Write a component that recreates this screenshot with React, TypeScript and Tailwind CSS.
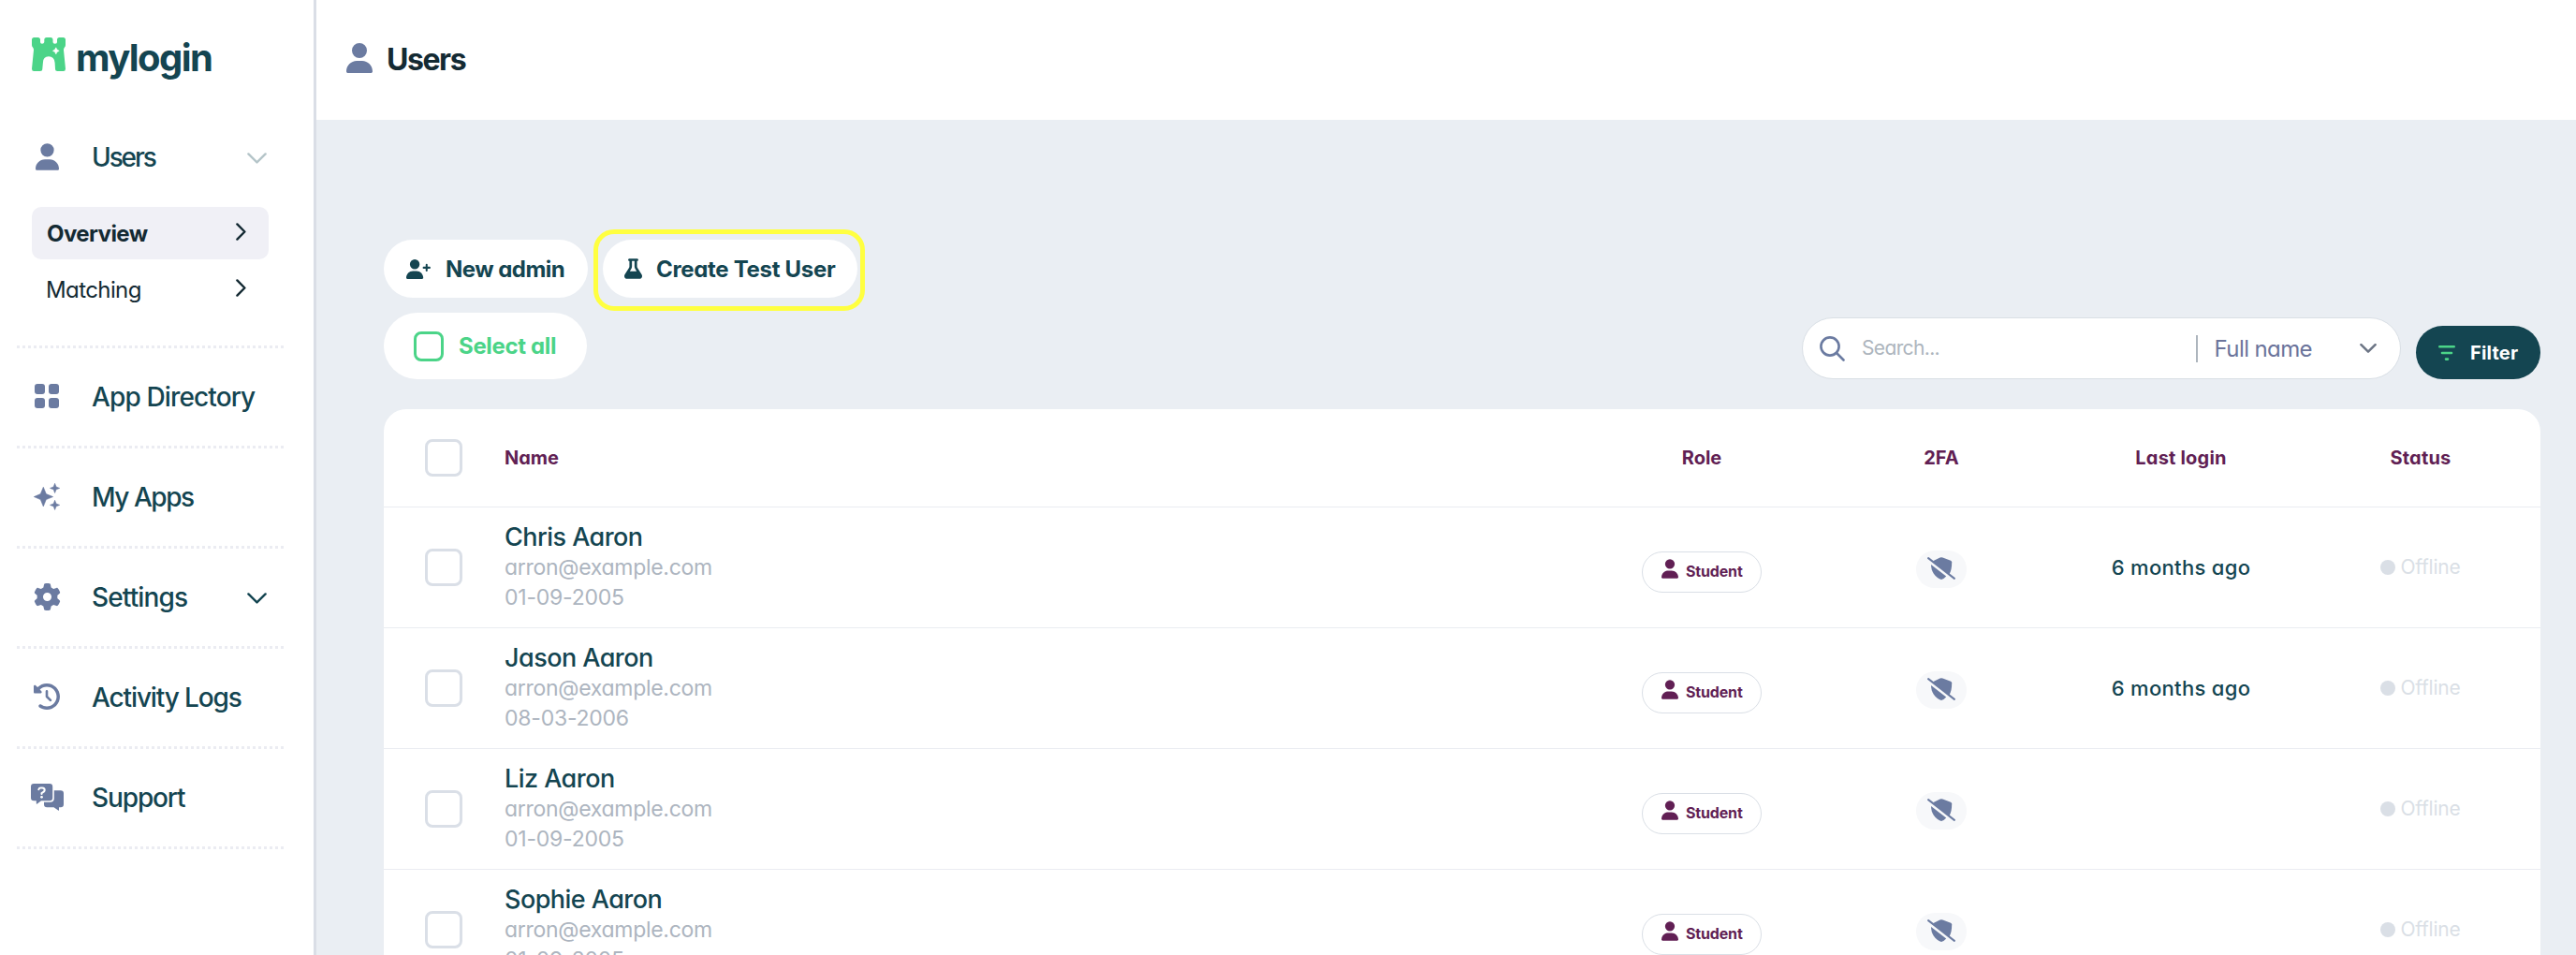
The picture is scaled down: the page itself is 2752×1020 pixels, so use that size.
import type { ReactNode } from "react";
import { FaClockRotateLeft, FaFlask, FaGear, FaUser } from "react-icons/fa6";

const users = [
  { name: "Chris Aaron", email: "arron@example.com", dob: "01-09-2005", lastLogin: "6 months ago" },
  { name: "Jason Aaron", email: "arron@example.com", dob: "08-03-2006", lastLogin: "6 months ago" },
  { name: "Liz Aaron", email: "arron@example.com", dob: "01-09-2005", lastLogin: "" },
  { name: "Sophie Aaron", email: "arron@example.com", dob: "01-09-2005", lastLogin: "" },
];

function CastleLogo() {
  return (
    <svg viewBox="0 0 36 36" className="size-9 shrink-0 text-[#4bd488]">
      <path
        fill="currentColor"
        d="M2.5 0H6.5Q9 0 9 2.5V5Q9 6.8 11 6.8T13.3 5V2.5Q13.3 0 15.8 0H20Q22.5 0 22.5 2.5V5Q22.5 6.8 24.8 6.8T27 5V2.5Q27 0 29.5 0H33.5Q36 0 36 2.5V8Q36 9.5 35 10.5Q33.8 11.8 34 13.5L36 33.5Q36 36 33.8 36H27.5Q25 36 25 33.5L24.6 27Q24 20.3 18 20.3T11.9 27L11.3 33.5Q11.3 36 8.8 36H2.2Q0 36 0 33.5L2 13.5Q2.2 11.8 1 10.5Q0 9.5 0 8V2.5Q0 0 2.5 0Z"
      />
      <path fill="#fff" d="M25.8 10.8Q26.4 13.6 29.2 14.3Q26.4 15 25.8 17.8Q25.2 15 22.4 14.3Q25.2 13.6 25.8 10.8Z" stroke="#fff" strokeWidth=".6" />
    </svg>
  );
}

function GridIcon() {
  return (
    <svg viewBox="0 0 26 26" className="size-[26px]" fill="currentColor">
      <rect width="11" height="11" rx="3" />
      <rect x="15" width="11" height="11" rx="3" />
      <rect y="15" width="11" height="11" rx="3" />
      <rect x="15" y="15" width="11" height="11" rx="3" />
    </svg>
  );
}

function SparklesIcon() {
  return (
    <svg viewBox="0 0 28 29" className="h-[29px] w-7" fill="currentColor" stroke="currentColor" strokeWidth=".6" strokeLinejoin="round">
      <path d="M10.3 4.3L13.3 11.6L20.6 14.6L13.3 17.6L10.3 24.9L7.3 17.6L.3 14.6L7.3 11.6Z" />
      <path d="M22.6 .3L24 4L27.7 5.4L24 6.8L22.6 10.5L21.2 6.8L17.5 5.4L21.2 4Z" />
      <path d="M22.6 18.3L24 22L27.7 23.4L24 24.8L22.6 28.5L21.2 24.8L17.5 23.4L21.2 22Z" />
    </svg>
  );
}

function SupportIcon() {
  return (
    <svg viewBox="0 0 35 29" className="h-[29px] w-[35px]">
      <path fill="currentColor" d="M24.8 7.2H31.8Q35 7.2 35 10.4V22Q35 25.2 31.8 25.2H30V28.2Q30 29 29.2 28.6L24.5 25.2H17.2Q14 25.2 14 22V19.8H20.5Q24.8 19.8 24.8 15.8Z" />
      <path fill="currentColor" d="M3.2 0H20Q23.2 0 23.2 3.2V15Q23.2 18.2 20 18.2H11L6.8 21.5Q5.8 22 5.8 21V18.2H3.2Q0 18.2 0 15V3.2Q0 0 3.2 0Z" />
      <path fill="none" stroke="#fff" strokeWidth="2" strokeLinecap="round" strokeLinejoin="round" d="M8.3 6.2Q8.8 4.6 10.6 4.6H12.2Q14.8 4.8 14.7 7Q14.5 8.4 13 9.2L11.5 10.2V11" />
      <circle cx="11.5" cy="14.3" r="1.4" fill="#fff" />
    </svg>
  );
}

function UserPlusIcon() {
  return (
    <svg viewBox="0 0 640 512" className="h-[21px] w-[26px] shrink-0">
      <path fill="currentColor" d="M224 256a128 128 0 1 0 0-256 128 128 0 1 0 0 256zm-45.7 48C79.8 304 0 383.8 0 482.3 0 498.7 13.3 512 29.7 512h388.6c16.4 0 29.7-13.3 29.7-29.7 0-98.5-79.8-178.3-178.3-178.3z" />
      <path fill="none" stroke="currentColor" strokeWidth="50" strokeLinecap="round" d="M536 138v156M458 216h156" />
    </svg>
  );
}

function ShieldSlashIcon() {
  return (
    <svg viewBox="0 0 30 24" className="h-6 w-[30px] text-[#6b7ba1]">
      <path fill="currentColor" d="M6 4.2L13.6 .5Q15 0 16.4 .5L25 3.8Q26.2 4.4 26.2 5.6C26.2 11 25.4 15 23.4 18.4Z" />
      <path fill="currentColor" d="M4 8L20.2 20.6C18.4 22.6 16.4 23.8 15 24C8 21.8 4 15 4 8Z" />
      <path stroke="currentColor" strokeWidth="2" strokeLinecap="round" d="M1.1 1.1L28.9 22.9" />
    </svg>
  );
}

function ChevronDown({ className }: { className: string }) {
  return (
    <svg viewBox="0 0 21 12" className={className} fill="none" stroke="currentColor" strokeLinecap="round" strokeLinejoin="round">
      <path d="M1.4 1.4L10.5 10.4L19.6 1.4" />
    </svg>
  );
}

function ChevronRight() {
  return (
    <svg viewBox="0 0 11 19" className="mb-1 h-[19px] w-[11px]" fill="none" stroke="currentColor" strokeWidth="2.4" strokeLinecap="round" strokeLinejoin="round">
      <path d="M1.4 1.4L9.4 9.5L1.4 17.6" />
    </svg>
  );
}

function Divider() {
  return <div className="ml-[18px] h-[3px] w-[285px] bg-[repeating-linear-gradient(90deg,#ebecf2_0_3px,transparent_3px_6px)]" />;
}

interface NavItemProps {
  icon: ReactNode;
  label: string;
  tracking?: string;
  children?: ReactNode;
}

function NavItem({ icon, label, tracking = "tracking-[-0.04em]", children }: NavItemProps) {
  return (
    <div className="flex h-[104px] items-center pb-0.5 pl-8 pr-[50px]">
      <span className="flex w-9 justify-center text-[#6b7ba1]">{icon}</span>
      <span className={`ml-[30px] flex-1 whitespace-nowrap pt-0.5 text-[28px] font-medium text-[#144551] ${tracking}`}>{label}</span>
      {children}
    </div>
  );
}

function Sidebar() {
  return (
    <aside className="w-[338px] shrink-0 border-r-[3px] border-[#dadee6] bg-white">
      <div className="flex h-[116px] items-start pl-[34px] pt-10">
        <CastleLogo />
        <span className="ml-[11px] text-[40px] leading-[44px] font-bold tracking-[-0.04em] text-[#144551]">mylogin</span>
      </div>
      <NavItem icon={<FaUser className="h-[29px] w-[25px]" />} label="Users" tracking="tracking-[-0.075em]">
        <ChevronDown className="mt-1 h-3 w-[21px] stroke-[2.4] text-[#b5c5c9]" />
      </NavItem>
      <div className="mb-8 ml-[34px] mr-12 mt-px flex flex-col gap-1 text-2xl text-[#142a33]">
        <div className="flex h-14 items-center justify-between rounded-[10px] bg-[#f0f0f6] pl-4 pr-6">
          <span className="pt-px font-bold tracking-[-0.024em]">Overview</span>
          <ChevronRight />
        </div>
        <div className="flex h-14 items-center justify-between pl-[15px] pr-6">
          <span className="pt-px tracking-[-0.025em]">Matching</span>
          <ChevronRight />
        </div>
      </div>
      <Divider />
      <NavItem icon={<GridIcon />} label="App Directory" tracking="tracking-[-0.031em]" />
      <Divider />
      <NavItem icon={<SparklesIcon />} label="My Apps" tracking="tracking-[-0.052em]" />
      <Divider />
      <NavItem icon={<FaGear className="size-[29px]" />} label="Settings" tracking="tracking-[-0.031em]">
        <ChevronDown className="mt-1 h-3 w-[21px] stroke-[2.4] text-[#144551]" />
      </NavItem>
      <Divider />
      <NavItem icon={<FaClockRotateLeft className="size-7" />} label="Activity Logs" />
      <Divider />
      <NavItem icon={<SupportIcon />} label="Support" />
      <Divider />
    </aside>
  );
}

function Checkbox() {
  return <span className="ml-11 mr-[45px] size-10 shrink-0 rounded-lg border-[3px] border-[#dadfe7]" />;
}

function Toolbar() {
  return (
    <div className="text-2xl font-bold text-[#144551]">
      <div className="flex gap-4">
        <button className="flex h-[62px] w-[218px] items-center rounded-full bg-white pl-6">
          <UserPlusIcon />
          <span className="ml-4 whitespace-nowrap pt-px tracking-[-0.022em]">New admin</span>
        </button>
        <button className="relative flex h-[62px] w-[272px] items-center rounded-full bg-white pl-[23px]">
          <FaFlask className="h-[22px] w-[19px] shrink-0" />
          <span className="ml-[15px] whitespace-nowrap pt-px tracking-[-0.013em]">Create Test User</span>
          {/* Highlight ring */}
          <span className="absolute -bottom-3.5 -left-2.5 -right-2 -top-[11px] rounded-[22px] border-[5px] border-[#ffff40]" />
        </button>
      </div>
      <div className="mt-4 flex items-end">
        <button className="flex h-[71px] w-[217px] items-center rounded-full bg-white pl-8 text-[#4bd488]">
          <span className="size-8 rounded-lg border-[3px] border-[#4bd488]" />
          <span className="ml-4 whitespace-nowrap tracking-[-0.014em]">Select all</span>
        </button>
        <div className="ml-auto flex h-[66px] w-[640px] items-center rounded-full border border-[#d9dfe5] bg-white pl-[18px] font-normal">
          <svg viewBox="0 0 27 27" className="size-[27px] text-[#6b7ba1]" fill="none" stroke="currentColor" strokeWidth="2.6" strokeLinecap="round">
            <circle cx="11" cy="11" r="9.6" />
            <path d="M18 18L25.5 25.5" />
          </svg>
          <span className="ml-[18px] flex-1 text-[21px] tracking-[-0.03em] text-[#adb5bd]">Search...</span>
          <span className="h-[29px] w-0.5 bg-[#adb5bd]" />
          <span className="ml-[18px] whitespace-nowrap pt-px tracking-[-0.025em] text-[#6b749b]">Full name</span>
          <ChevronDown className="ml-[51px] mr-[25px] h-2.5 w-[18px] stroke-[3] text-[#6c7585]" />
        </div>
        <button className="ml-4 flex h-[57px] w-[133px] items-center rounded-full bg-[#144551] pl-6 text-white">
          <svg viewBox="0 0 18 16" className="h-4 w-[18px] text-[#4bd488]" fill="none" stroke="currentColor" strokeWidth="2.6" strokeLinecap="round">
            <path d="M1.3 1.3H16.7M4 8H14M8 14.6H10" />
          </svg>
          <span className="ml-4 text-xl tracking-[0.01em]">Filter</span>
        </button>
      </div>
    </div>
  );
}

function UserRow({ user }: { user: (typeof users)[number] }) {
  return (
    <div className="flex h-[129px] items-center border-t border-[#eaecf1]">
      <Checkbox />
      <div className="flex-1 text-[23px] leading-8 text-[#adb5c0]">
        <p className="text-[27px] leading-8 font-medium tracking-[-0.02em] text-[#144551]">{user.name}</p>
        <p className="tracking-[-0.013em]">{user.email}</p>
        <p className="tracking-[-0.01em]">{user.dob}</p>
      </div>
      <div className="flex w-64 justify-center pt-2.5">
        <span className="flex h-11 w-32 items-center rounded-full border border-[#dadfe6] pl-5 text-[#611f54]">
          <FaUser className="mb-[7px] h-[21px] w-[18px]" />
          <span className="mb-[3px] ml-2 text-base font-bold tracking-[-0.01em]">Student</span>
        </span>
      </div>
      <div className="flex w-64 justify-center pt-[3px]">
        <span className="flex h-10 w-[54px] items-center justify-center rounded-full bg-[#f7f8fa] pb-0.5">
          <ShieldSlashIcon />
        </span>
      </div>
      <div className="w-64 pt-px text-center text-[22px] font-medium tracking-[0.015em] text-[#144551]">{user.lastLogin}</div>
      <div className="flex w-64 items-center justify-center text-[21px] text-[#dadfe6]">
        <span className="size-4 rounded-full bg-[#dadfe6]" />
        <span className="ml-[5px] pb-px tracking-[-0.01em]">Offline</span>
      </div>
    </div>
  );
}

export default function App() {
  return (
    <div className="flex h-[1020px] w-[2752px] overflow-hidden bg-[#eaeef3] font-['Inter',sans-serif] [font-feature-settings:'cv11']">
      <Sidebar />
      <main className="flex-1">
        <header className="flex h-32 items-center bg-white pb-1 pl-8">
          <FaUser className="h-8 w-7 text-[#6b7ba1]" />
          <h1 className="ml-[15px] mt-[3px] text-[32px] font-bold tracking-[-0.045em] text-[#142a33]">Users</h1>
        </header>
        <div className="pl-[72px] pr-[38px] pt-32">
          <Toolbar />
          <div className="mt-8 rounded-t-3xl bg-white">
            <div className="flex h-[104px] items-center text-center text-xl font-bold text-[#611f54]">
              <Checkbox />
              <span className="flex-1 text-left">Name</span>
              <span className="w-64">Role</span>
              <span className="w-64">2FA</span>
              <span className="w-64 tracking-[0.01em]">Last login</span>
              <span className="w-64 tracking-[0.01em]">Status</span>
            </div>
            {users.map((user) => (
              <UserRow key={user.name} user={user} />
            ))}
          </div>
        </div>
      </main>
    </div>
  );
}
